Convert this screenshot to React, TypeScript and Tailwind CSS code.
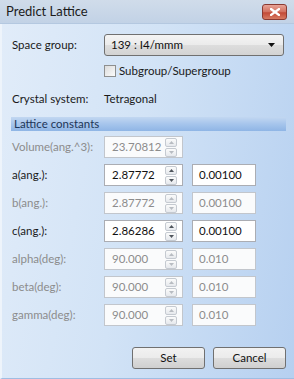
import React from "react";

const font = { fontFamily: 'Lato, "Noto Sans", sans-serif' };

function Spinner({ disabled }: { disabled?: boolean }) {
  const arrow = disabled ? "#b8bcc2" : "#4f555c";
  const btn =
    "w-[12px] h-[9px] border border-[#c5cad1] rounded-[2px] bg-[linear-gradient(#fbfbfb,#e6e9ed)] flex items-center justify-center";
  return (
    <div className="flex flex-col gap-[1px] mr-[5px]">
      <div className={btn}>
        <svg width="5" height="3" viewBox="0 0 5 3">
          <path d="M0 3 L2.5 0 L5 3 Z" fill={arrow} />
        </svg>
      </div>
      <div className={btn}>
        <svg width="5" height="3" viewBox="0 0 5 3">
          <path d="M0 0 L2.5 3 L5 0 Z" fill={arrow} />
        </svg>
      </div>
    </div>
  );
}

function Row({
  label,
  value,
  step,
  disabled,
}: {
  label: string;
  value: string;
  step?: string;
  disabled?: boolean;
}) {
  return (
    <div className="flex items-center h-[22px]">
      <div
        className={`w-[92px] text-[11.5px] ${disabled ? "text-[#8c8c8c]" : "text-[#1a1a1a]"}`}
      >
        {label}
      </div>
      <div
        className={`w-[79px] h-[22px] flex items-center justify-between border ${
          disabled ? "border-[#c2c6cc] bg-[#fafbfc]" : "border-[#abadb3] bg-white"
        }`}
      >
        <span
          className={`pl-[7px] text-[11.5px] ${disabled ? "text-[#8c8c8c]" : "text-[#111]"}`}
        >
          {value}
        </span>
        <Spinner disabled={disabled} />
      </div>
      {step !== undefined && (
        <div
          className={`ml-[9px] w-[64px] h-[22px] flex items-center border ${
            disabled ? "border-[#c2c6cc] bg-[#fafbfc]" : "border-[#abadb3] bg-white"
          }`}
        >
          <span
            className={`pl-[6px] text-[11.5px] ${disabled ? "text-[#8c8c8c]" : "text-[#111]"}`}
          >
            {step}
          </span>
        </div>
      )}
    </div>
  );
}

export default function App() {
  return (
    <div
      style={font}
      className="w-[294px] h-[379px] flex flex-col overflow-hidden bg-[#c5d8ef]"
    >
      {/* Title bar */}
      <div className="h-[24px] flex items-center justify-between pl-[6px] pr-[7px] bg-[linear-gradient(#d0dcea,#c2d2e6)] border-b border-[#b4c8e0]">
        <span className="text-[13px] text-[#1b1b1b]">Predict Lattice</span>
        <div className="w-[25px] h-[16px] rounded-[3px] border border-[#8a3a32] bg-[linear-gradient(#e8a396,#d2705f_50%,#c24a37_55%,#d77a62)] flex items-center justify-center">
          <svg width="10" height="8" viewBox="0 0 10 8">
            <path
              d="M1 1 L9 7 M9 1 L1 7"
              stroke="#ffffff"
              strokeWidth="2.2"
              strokeLinecap="square"
            />
          </svg>
        </div>
      </div>

      {/* Body */}
      <div className="flex-1 flex flex-col border-l-[2px] border-l-[#eef4fb] border-b border-b-[#9fbde2] bg-[linear-gradient(100deg,#e1ecf9_0%,#d2e3f6_45%,#b6d0f0_100%)] pl-[10px] pr-[8px]">
        {/* Space group */}
        <div className="flex items-center mt-[10px] h-[22px]">
          <div className="w-[92px] text-[11.5px] text-[#1a1a1a]">Space group:</div>
          <div className="w-[180px] h-[22px] rounded-[3px] border border-[#707070] bg-[linear-gradient(#f4f4f4,#ebebeb_50%,#dddddd_51%,#d3d3d3)] flex items-center justify-between pl-[6px] pr-[8px]">
            <span className="text-[11.5px] text-[#111]">139 : I4/mmm</span>
            <svg width="7" height="4" viewBox="0 0 7 4">
              <path d="M0 0 L7 0 L3.5 4 Z" fill="#111" />
            </svg>
          </div>
        </div>

        {/* checkbox */}
        <div className="flex items-center mt-[8px] ml-[92px] h-[13px]">
          <div className="w-[12px] h-[12px] border border-[#8e8f8f] bg-[linear-gradient(135deg,#dcdcdc,#fbfbfb)]" />
          <span className="ml-[3px] text-[11.5px] text-[#1a1a1a]">Subgroup/Supergroup</span>
        </div>

        {/* Crystal system */}
        <div className="flex items-center mt-[14px] h-[16px]">
          <div className="w-[92px] text-[11.5px] text-[#1a1a1a]">Crystal system:</div>
          <span className="text-[11.5px] text-[#1a1a1a]">Tetragonal</span>
        </div>

        {/* Lattice constants header */}
        <div className="mt-[10px] -ml-[1px] h-[14px] flex items-center pl-[3px] bg-[linear-gradient(#c2d7f1,#a6c5ec_50%,#8fb5e5)]">
          <span className="text-[11.5px] leading-none text-[#1d3557]">Lattice constants</span>
        </div>

        <div className="flex flex-col gap-[6px] mt-[5px]">
          <Row label="Volume(ang.^3):" value="23.70812" disabled />
          <Row label="a(ang.):" value="2.87772" step="0.00100" />
          <Row label="b(ang.):" value="2.87772" step="0.00100" disabled />
          <Row label="c(ang.):" value="2.86286" step="0.00100" />
          <Row label="alpha(deg):" value="90.000" step="0.010" disabled />
          <Row label="beta(deg):" value="90.000" step="0.010" disabled />
          <Row label="gamma(deg):" value="90.000" step="0.010" disabled />
        </div>

        {/* Buttons */}
        <div className="flex justify-end gap-[8px] mt-[21px]">
          <button className="w-[73px] h-[22px] rounded-[3px] border border-[#707070] bg-[linear-gradient(#f2f2f2,#ebebeb_50%,#dddddd_51%,#cfcfcf)] text-[11.5px] text-[#111]">
            Set
          </button>
          <button className="w-[73px] h-[22px] rounded-[3px] border border-[#707070] bg-[linear-gradient(#f2f2f2,#ebebeb_50%,#dddddd_51%,#cfcfcf)] text-[11.5px] text-[#111]">
            Cancel
          </button>
        </div>
      </div>
    </div>
  );
}
